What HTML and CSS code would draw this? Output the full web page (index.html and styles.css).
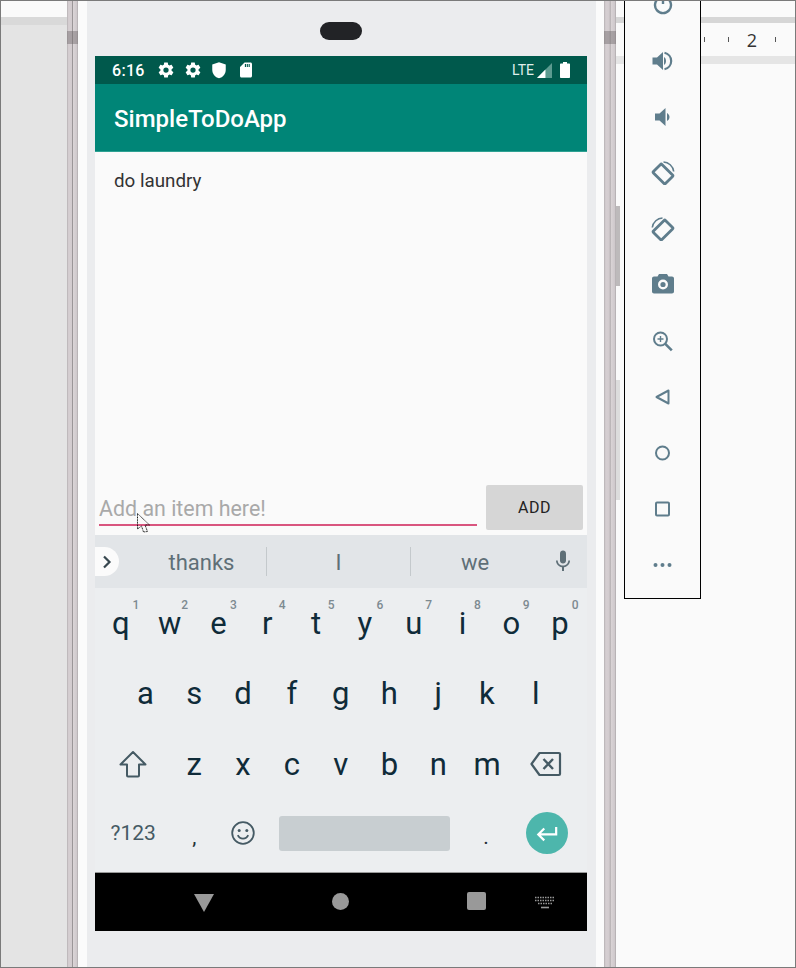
FILE: index.html
```html
<!DOCTYPE html>
<html>
  <head>
    <meta charset="utf-8">
    <title>SimpleToDoApp</title>
    <link rel="stylesheet" href="styles.css">
  </head>
  <body>
    <div class="window">
      <!-- editor behind the emulator, left -->
      <div class="side side-left">
        <div class="side-top"></div>
        <div class="band band-left"></div>
      </div>

      <div class="phone">
        <div class="rail rail-left"><div class="rail-joint"></div></div>
        <div class="bezel bezel-left"></div>
        <div class="body">
          <div class="notch"></div>
          <div class="screen">
            <div class="status">
              <span class="clock">6:16</span>
              <svg class="st-icon" viewBox="0 0 24 24"><path fill="#fff" d="M19.4 13c.04-.32.1-.66.1-1s-.06-.68-.1-1l2.1-1.6c.2-.15.25-.42.12-.64l-2-3.46c-.12-.22-.39-.3-.61-.22l-2.49 1c-.52-.4-1.08-.73-1.69-.98l-.38-2.65A.49.49 0 0 0 14 2h-4c-.25 0-.46.18-.49.42l-.38 2.65c-.61.25-1.17.59-1.69.98l-2.49-1c-.23-.09-.49 0-.61.22l-2 3.46c-.13.22-.07.49.12.64L4.6 11c-.04.32-.1.66-.1 1s.06.68.1 1l-2.1 1.6c-.2.15-.25.42-.12.64l2 3.46c.12.22.39.3.61.22l2.49-1c.52.4 1.08.73 1.69.98l.38 2.65c.03.24.24.42.49.42h4c.25 0 .46-.18.49-.42l.38-2.65c.61-.25 1.17-.59 1.69-.98l2.49 1c.23.09.49 0 .61-.22l2-3.46c.12-.22.07-.49-.12-.64L19.4 13zM12 15.5a3.5 3.5 0 1 1 0-7 3.5 3.5 0 0 1 0 7z"/></svg>
              <svg class="st-icon" viewBox="0 0 24 24"><path fill="#fff" d="M19.4 13c.04-.32.1-.66.1-1s-.06-.68-.1-1l2.1-1.6c.2-.15.25-.42.12-.64l-2-3.46c-.12-.22-.39-.3-.61-.22l-2.49 1c-.52-.4-1.08-.73-1.69-.98l-.38-2.65A.49.49 0 0 0 14 2h-4c-.25 0-.46.18-.49.42l-.38 2.65c-.61.25-1.17.59-1.69.98l-2.49-1c-.23-.09-.49 0-.61.22l-2 3.46c-.13.22-.07.49.12.64L4.6 11c-.04.32-.1.66-.1 1s.06.68.1 1l-2.1 1.6c-.2.15-.25.42-.12.64l2 3.46c.12.22.39.3.61.22l2.49-1c.52.4 1.08.73 1.69.98l.38 2.65c.03.24.24.42.49.42h4c.25 0 .46-.18.49-.42l.38-2.65c.61-.25 1.17-.59 1.69-.98l2.49 1c.23.09.49 0 .61-.22l2-3.46c.12-.22.07-.49-.12-.64L19.4 13zM12 15.5a3.5 3.5 0 1 1 0-7 3.5 3.5 0 0 1 0 7z"/></svg>
              <svg class="st-icon" viewBox="0 0 24 24"><path fill="#fff" d="M12 1.5 3 4.5v7c0 5.5 3.8 10 9 11.500 5.200-1.500 9-6 9-11.500v-7z"/></svg>
              <svg class="st-icon" viewBox="0 0 24 24"><path fill="#fff" d="M18 2h-8L4 8v12c0 1.100.9 2 2 2h12c1.100 0 2-.9 2-2V4c0-1.100-.9-2-2-2zM12 8h-1.500V4H12v4zm2.500 0H13V4h1.500v4zM17 8h-1.500V4H17v4z"/></svg>
              <span class="lte">LTE</span>
              <svg class="signal" viewBox="0 0 16 16"><path fill="#5c9b90" d="M16 0v16H0z"/><path fill="#fff" d="M9 7v9H0z"/></svg>
              <svg class="battery" viewBox="0 0 10 16"><path fill="#fff" d="M3 0h4v1.500h2c.6 0 1 .4 1 1V15c0 .6-.4 1-1 1H1c-.6 0-1-.4-1-1V2.500c0-.6.4-1 1-1h2z"/></svg>
            </div>
            <div class="appbar">SimpleToDoApp</div>

            <div class="content">
              <ul class="todo-list">
                <li>do laundry</li>
              </ul>
              <div class="add-row">
                <div class="field">Add an item here!</div>
                <button class="add-btn">ADD</button>
              </div>
            </div>

            <div class="suggest">
              <div class="chip">
                <svg viewBox="0 0 12 16" class="chip-arrow"><path fill="none" stroke="#37474f" stroke-width="2.200" d="M3 2.500 8.500 8 3 13.500"/></svg>
              </div>
              <div class="word word-first">thanks</div>
              <div class="word">I</div>
              <div class="word word-last">we</div>
              <svg class="mic" viewBox="0 0 24 24"><path fill="#5f6f77" d="M12 14.500c1.700 0 3-1.300 3-3v-7c0-1.700-1.300-3-3-3s-3 1.300-3 3v7c0 1.700 1.300 3 3 3z"/><path fill="#5f6f77" d="M17.300 11.500c0 3-2.500 5.100-5.300 5.100s-5.300-2.100-5.300-5.100H5c0 3.400 2.700 6.200 6 6.700V22h2v-3.800c3.300-.5 6-3.300 6-6.700z"/></svg>
            </div>

            <div class="keys">
              <div class="row row-top">
                <div class="key">q<span class="hint">1</span></div>
                <div class="key">w<span class="hint">2</span></div>
                <div class="key">e<span class="hint">3</span></div>
                <div class="key">r<span class="hint">4</span></div>
                <div class="key">t<span class="hint">5</span></div>
                <div class="key">y<span class="hint">6</span></div>
                <div class="key">u<span class="hint">7</span></div>
                <div class="key">i<span class="hint">8</span></div>
                <div class="key">o<span class="hint">9</span></div>
                <div class="key">p<span class="hint">0</span></div>
              </div>
              <div class="row row-mid">
                <div class="key">a</div>
                <div class="key">s</div>
                <div class="key">d</div>
                <div class="key">f</div>
                <div class="key">g</div>
                <div class="key">h</div>
                <div class="key">j</div>
                <div class="key">k</div>
                <div class="key">l</div>
              </div>
              <div class="row row-low">
                <div class="key">
                  <svg class="key-icon" viewBox="0 0 28 28"><path fill="none" stroke="#455a64" stroke-width="2" stroke-linejoin="round" d="M14 2 1.500 14.500H8V25.500c0 .8.500 1 1 1H19c.5 0 1-.2 1-1V14.500h6.500z"/></svg>
                </div>
                <div class="key">z</div>
                <div class="key">x</div>
                <div class="key">c</div>
                <div class="key">v</div>
                <div class="key">b</div>
                <div class="key">n</div>
                <div class="key">m</div>
                <div class="key key-back">
                  <svg class="key-icon key-del" viewBox="0 0 32 26"><path fill="none" stroke="#455a64" stroke-width="2.200" stroke-linejoin="round" d="M9.500 2H29c.6 0 1 .4 1 1v20c0 .6-.4 1-1 1H9.500L1.500 13z"/><path fill="none" stroke="#455a64" stroke-width="2.400" d="m13.500 8 9.500 10M23 8l-9.500 10"/></svg>
                </div>
              </div>
              <div class="row row-bottom">
                <div class="key key-sym">?123</div>
                <div class="key key-punct">,</div>
                <div class="key">
                  <svg class="key-icon key-smile" viewBox="0 0 24 24"><circle cx="12" cy="12" r="10.800" fill="none" stroke="#455a64" stroke-width="1.800"/><circle cx="8.200" cy="9.500" r="1.500" fill="#455a64"/><circle cx="15.800" cy="9.500" r="1.500" fill="#455a64"/><path fill="none" stroke="#455a64" stroke-width="1.800" d="M6.800 14.200c1 2.200 3 3.400 5.200 3.400s4.200-1.200 5.200-3.400"/></svg>
                </div>
                <div class="key"><div class="space"></div></div>
                <div class="key key-punct">.</div>
                <div class="key">
                  <div class="enter">
                    <svg viewBox="0 0 24 18" class="enter-icon"><path fill="none" stroke="#fff" stroke-width="2.400" d="M22 2v8H3M9 3.500 2.500 10 9 16.500"/></svg>
                  </div>
                </div>
              </div>
            </div>

            <div class="navbar">
              <svg class="nav-back" viewBox="0 0 20 18"><path fill="#999" d="M0 0h20L10 18z"/></svg>
              <div class="nav-home"></div>
              <div class="nav-recent"></div>
              <svg class="nav-kbd" viewBox="0 0 20 14"><path fill="none" stroke="#999" stroke-width="1.400" stroke-dasharray="1.500 1" d="M0 2.500h20M0 5.500h20M3 8.500h14"/><path stroke="#999" stroke-width="1.600" d="M6 12.500h8"/></svg>
            </div>
          </div>
        </div>
        <div class="bezel bezel-right"></div>
        <div class="rail rail-right"><div class="rail-joint"></div></div>
        <div class="rocker"></div>
        <div class="power-key"></div>
      </div>

      <!-- editor behind the emulator, right -->
      <div class="side side-right">
        <div class="side-top"></div>
        <div class="band band-dark"></div>
        <div class="ruler">
          <span class="tick"></span>
          <span class="tick"></span>
          <span class="ruler-num">2</span>
          <span class="tick"></span>
        </div>
        <div class="band band-light"></div>

        <div class="toolbar">
          <div class="tool tool-first">
            <svg viewBox="0 0 24 24"><path fill="none" stroke="#5f7d8c" stroke-width="2.400" d="M7.500 5.500a8 8 0 1 0 9 0"/><path stroke="#5f7d8c" stroke-width="2.400" d="M12 2v9"/></svg>
          </div>
          <div class="tool">
            <svg viewBox="0 0 24 24"><path fill="#5f7d8c" d="M1.500 8.500v7H6l6 5.500V3L6 8.500H1.500zm13.500 3.500c0-1.770-.7-3.290-2-4v8c1.300-.7 2-2.250 2-4z"/><path fill="none" stroke="#5f7d8c" stroke-width="2.200" d="M13.500 3.800c3.800.9 6.700 4.200 6.700 8.200s-2.900 7.300-6.700 8.200"/></svg>
          </div>
          <div class="tool">
            <svg viewBox="0 0 24 24"><path fill="#5f7d8c" d="M18.500 12c0-1.770-1.020-3.290-2.500-4.030v8.050c1.480-.73 2.500-2.250 2.500-4.020zM4 8.500v7h4.500l6 5.500V3l-6 5.500H4z"/></svg>
          </div>
          <div class="tool">
            <svg viewBox="0 0 24 24"><rect x="6" y="4.500" width="12" height="17" rx="1" transform="rotate(-45 12 13)" fill="none" stroke="#5f7d8c" stroke-width="2.800"/><path fill="none" stroke="#5f7d8c" stroke-width="1.600" d="M12.500 1c5 .2 9.500 4 10.200 9.500"/></svg>
          </div>
          <div class="tool">
            <svg viewBox="0 0 24 24"><rect x="6" y="4.500" width="12" height="17" rx="1" transform="rotate(45 12 13)" fill="none" stroke="#5f7d8c" stroke-width="2.800"/><path fill="none" stroke="#5f7d8c" stroke-width="1.600" d="M11.500 1C6.500 1.200 2 5 1.300 10.500"/></svg>
          </div>
          <div class="tool tool-camera">
            <svg viewBox="0 0 24 24"><path fill="#5f7d8c" d="M8 2 6.500 4.500H3c-1.100 0-2 .9-2 2v13c0 1.100.9 2 2 2h18c1.100 0 2-.9 2-2v-13c0-1.100-.9-2-2-2h-3.500L16 2z"/><circle cx="12" cy="12.500" r="3.800" fill="none" stroke="#fafafa" stroke-width="2.400"/></svg>
          </div>
          <div class="tool">
            <svg viewBox="0 0 24 24"><circle cx="9.500" cy="10" r="6.500" fill="none" stroke="#5f7d8c" stroke-width="2"/><path stroke="#5f7d8c" stroke-width="2.600" d="m14.300 14.800 6.500 6.500"/><path stroke="#5f7d8c" stroke-width="1.400" d="M9.500 7v6M6.500 10h6"/></svg>
          </div>
          <div class="tool">
            <svg viewBox="0 0 24 24"><path fill="none" stroke="#5f7d8c" stroke-width="2" stroke-linejoin="round" d="M17.500 5.500v13L5.500 12z"/></svg>
          </div>
          <div class="tool">
            <svg viewBox="0 0 24 24"><circle cx="11.500" cy="12" r="6.500" fill="none" stroke="#5f7d8c" stroke-width="2"/></svg>
          </div>
          <div class="tool">
            <svg viewBox="0 0 24 24"><rect x="5" y="5.500" width="13" height="13" rx="1" fill="none" stroke="#5f7d8c" stroke-width="2"/></svg>
          </div>
          <div class="tool">
            <svg viewBox="0 0 24 24"><circle cx="4.500" cy="12" r="2" fill="#5f7d8c"/><circle cx="11.500" cy="12" r="2" fill="#5f7d8c"/><circle cx="18.500" cy="12" r="2" fill="#5f7d8c"/></svg>
          </div>
        </div>
      </div>

      <!-- mouse pointer over the text field -->
      <svg class="pointer" viewBox="0 0 14 20"><path fill="none" stroke="#111" stroke-width="1" stroke-dasharray="1 .6" d="M.5.500 12.500 12 8 12 10.500 18.500 6.500 19 4.500 13 .5 16z"/></svg>
    </div>
  </body>
</html>
```

FILE: styles.css
```css
* {
  box-sizing: border-box;
}
html, body {
  margin: 0;
  padding: 0;
}
body {
  font-family: Roboto, "Liberation Sans", sans-serif;
}
ul {
  margin: 0;
  padding: 0;
  list-style-type: none;
}

.window {
  position: relative;
  display: flex;
  width: 796px;
  height: 968px;
  border: 1px solid #7a7a7a;
  background-color: #fafafa;
  overflow: hidden;
}

/* background panels */
.side-left {
  width: 66px;
  flex: none;
  background-color: #e4e4e4;
}
.side-top {
  height: 16px;
  background-color: #fafafa;
}
.band-left {
  height: 8px;
  background-color: #d9d9d9;
}
.side-right {
  position: relative;
  flex: 1;
}
.band-dark {
  height: 6px;
  background-color: #d6d6d6;
}
.band-light {
  height: 8px;
  background-color: #e5e5e5;
}
.ruler {
  position: relative;
  height: 33px;
  display: flex;
  align-items: center;
  padding-left: 88px;
  gap: 23px;
  font-family: "Open Sans", sans-serif;
  font-size: 18px;
  color: #333;
}
.tick {
  width: 1px;
  height: 5px;
  background-color: #555;
}
.ruler-num {
  width: 24px;
  margin: 0 -12px;
  text-align: center;
}

/* emulator toolbar */
.toolbar {
  position: absolute;
  left: 8px;
  top: -1px;
  width: 77px;
  height: 599px;
  border: 1px solid #000;
  border-top: none;
  background-color: #fafafa;
  overflow: hidden;
}
.tool {
  height: 56px;
  display: flex;
  align-items: center;
  justify-content: center;
}
.tool-first {
  margin-top: -23px;
}
.tool-camera svg {
  margin-top: -2px;
}
.tool svg {
  width: 24px;
  height: 24px;
}

/* phone frame */
.phone {
  position: relative;
  display: flex;
  width: 549px;
  flex: none;
}
.rail {
  position: relative;
  width: 11px;
  flex: none;
  background: linear-gradient(to right, #b5b0b2 0, #d6cfd2 15%, #d2cbce 45%, #9b9698 50%, #dad4d6 58%, #cec8cb 90%, #a8a4a6 100%);
}
.rail-right {
  width: 12px;
}
.rail-joint {
  position: absolute;
  left: 0;
  right: 0;
  top: 30px;
  height: 13px;
  background-color: rgba(110, 105, 107, .45);
}
.bezel {
  background-color: #fbfbfb;
  flex: none;
}
.bezel-left {
  width: 9px;
}
.bezel-right {
  width: 8px;
}
.body {
  width: 509px;
  flex: none;
  padding: 21px 9px 0 8px;
  background-color: #ebecee;
}
.notch {
  width: 42px;
  height: 18px;
  margin: 0 auto 16px;
  border-radius: 9px;
  background-color: #222326;
}
.rocker {
  position: absolute;
  right: -4px;
  top: 205px;
  width: 4px;
  height: 80px;
  background-color: #bdbabb;
}
.power-key {
  position: absolute;
  right: -4px;
  top: 379px;
  width: 4px;
  height: 120px;
  background-color: #dcdcdc;
}

/* screen */
.screen {
  display: flex;
  flex-direction: column;
  width: 492px;
  height: 875px;
}
.status {
  display: flex;
  align-items: center;
  height: 28px;
  padding: 0 17px 0 17px;
  background-color: #00594c;
  color: #fff;
}
.clock {
  width: 45px;
  font-size: 16px;
  font-weight: 500;
  letter-spacing: .3px;
}
.st-icon {
  width: 18px;
  height: 18px;
  margin-right: 8.500px;
}
.lte {
  margin-left: auto;
  margin-right: 3px;
  font-size: 14px;
  color: #dfeeea;
}
.signal {
  width: 15px;
  height: 15px;
  margin-right: 8px;
}
.battery {
  width: 10px;
  height: 16px;
}
.appbar {
  height: 68px;
  padding: 21px 0 0 19px;
  border-bottom: 1px solid #2ea192;
  background-color: #008577;
  color: #fff;
  font-size: 24px;
  font-weight: 500;
}
.content {
  flex: 1;
  display: flex;
  flex-direction: column;
  background-color: #fafafa;
}
.todo-list {
  flex: 1;
  padding: 18px 19px;
  font-size: 18.800px;
  color: #333;
}
.add-row {
  display: flex;
  padding: 0 4px 5px;
}
.field {
  width: 378px;
  height: 41px;
  padding-top: 11px;
  border-bottom: 2px solid #d9557f;
  margin-right: 9px;
  font-size: 21.400px;
  color: #a9a9a9;
}
.add-btn {
  width: 97px;
  height: 45px;
  padding: 0;
  border: none;
  border-radius: 2px;
  background-color: #d6d6d6;
  font-family: Roboto, sans-serif;
  font-size: 16px;
  font-weight: 400;
  letter-spacing: .5px;
  color: #222;
}

/* suggestions */
.suggest {
  position: relative;
  display: flex;
  align-items: center;
  height: 53px;
  background-color: #e2e5e8;
  font-size: 22px;
  color: #5f6f77;
}
.chip {
  width: 24px;
  height: 29px;
  display: flex;
  align-items: center;
  padding-left: 6px;
  border-radius: 0 15px 15px 0;
  background-color: #fbfbfb;
}
.chip-arrow {
  width: 12px;
  height: 16px;
}
.word {
  width: 144px;
  height: 29px;
  line-height: 31px;
  text-align: center;
  border-right: 1px solid #c4c9cc;
}
.word-first {
  width: 148px;
  padding-left: 18px;
}
.word-last {
  width: 128px;
  border-right: none;
}
.mic {
  position: absolute;
  left: 456px;
  top: 14px;
  width: 24px;
  height: 24px;
}

/* keyboard */
.keys {
  height: 285px;
  padding-left: 1.500px;
  border-bottom: 1px solid #999;
  background-color: #eceef0;
}
.row {
  display: grid;
  height: 70px;
}
.row-top {
  grid-template-columns: repeat(10, 48.800px);
}
.row-mid {
  grid-template-columns: repeat(9, 48.800px);
  padding-left: 24.500px;
}
.row-low {
  grid-template-columns: 73.350px repeat(7, 48.800px) 73.350px;
  height: 72px;
}
.row-bottom {
  grid-template-columns: 73.350px 48.900px 48.900px 193.850px 48.900px 73.350px;
  height: 72px;
  padding-bottom: 6px;
}
.key {
  position: relative;
  display: flex;
  align-items: center;
  justify-content: center;
  font-size: 31px;
  color: #0f2b39;
}
.key-back {
  padding-right: 4px;
}
.hint {
  position: absolute;
  right: 6px;
  top: 10px;
  font-size: 12px;
  font-weight: 500;
  color: #7d8a91;
}
.key-sym {
  font-size: 21px;
  color: #455a64;
}
.key-punct {
  font-size: 21px;
  color: #263238;
  padding-top: 8px;
}
.key-icon {
  width: 28px;
  height: 28px;
}
.key-del {
  width: 32px;
  height: 26px;
}
.key-smile {
  width: 24px;
  height: 24px;
}
.space {
  width: 171px;
  height: 35px;
  border-radius: 3px;
  background-color: #c8ced1;
}
.enter {
  width: 42px;
  height: 42px;
  display: flex;
  align-items: center;
  justify-content: center;
  border-radius: 50%;
  background-color: #4db6ac;
}
.enter-icon {
  width: 22px;
  height: 17px;
}

/* nav bar */
.navbar {
  position: relative;
  height: 58px;
  background-color: #000;
}
.nav-back {
  position: absolute;
  left: 99px;
  top: 21px;
  width: 20px;
  height: 18px;
}
.nav-home {
  position: absolute;
  left: 237px;
  top: 20px;
  width: 17px;
  height: 17px;
  border-radius: 50%;
  background-color: #999;
}
.nav-recent {
  position: absolute;
  left: 372px;
  top: 19px;
  width: 19px;
  height: 18px;
  border-radius: 2px;
  background-color: #999;
}
.nav-kbd {
  position: absolute;
  left: 440px;
  top: 22px;
  width: 20px;
  height: 14px;
}

.pointer {
  position: absolute;
  left: 136px;
  top: 512px;
  width: 14px;
  height: 20px;
}
```
